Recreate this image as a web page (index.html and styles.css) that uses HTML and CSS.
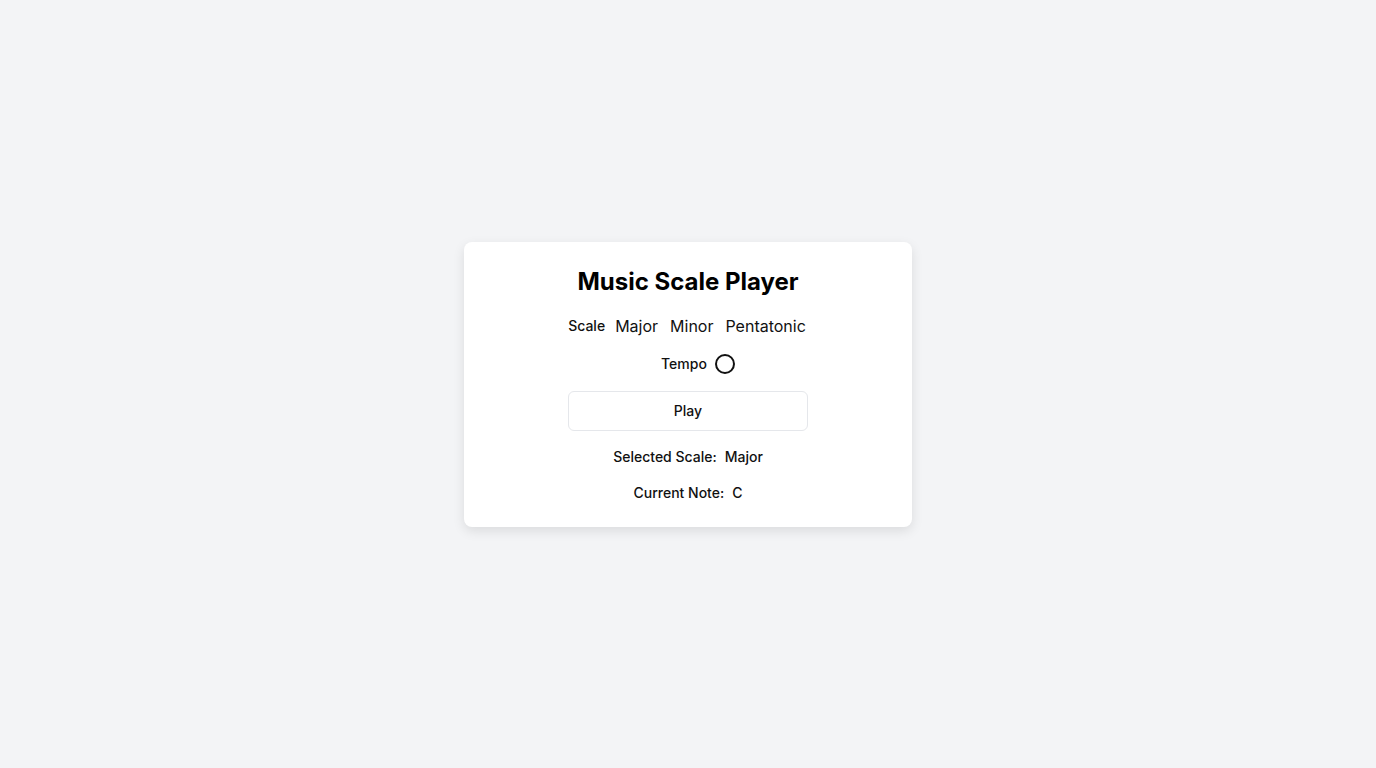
FILE: index.html
```html
<!DOCTYPE html>
<html lang="en">
<head>
<meta charset="utf-8">
<title>Music Scale Player</title>
<link rel="stylesheet" href="styles.css">
</head>
<body>
<main class="page">
  <section class="card">
    <h1 class="title">Music Scale Player</h1>
    <div class="row scale-row">
      <span class="label">Scale</span>
      <span class="option">Major</span>
      <span class="option">Minor</span>
      <span class="option">Pentatonic</span>
    </div>
    <div class="row tempo-row">
      <span class="label">Tempo</span>
      <span class="knob"></span>
    </div>
    <button class="play">Play</button>
    <div class="row info"><span>Selected Scale:</span><span>Major</span></div>
    <div class="row info"><span>Current Note:</span><span>C</span></div>
  </section>
</main>
</body>
</html>
```
FILE: styles.css
```css
* { box-sizing: border-box; }
html, body { margin: 0; padding: 0; }
body {
  background: #f3f4f6;
  font-family: Inter, "Noto Sans", sans-serif;
  color: #111111;
}
.page {
  min-height: 768px;
  display: flex;
  align-items: center;
  justify-content: center;
}
.card {
  width: 448px;
  background: #ffffff;
  border-radius: 8px;
  box-shadow: 0 4px 12px rgba(0, 0, 0, 0.1);
  padding: 24px;
  display: flex;
  flex-direction: column;
  align-items: center;
  gap: 16px;
}
.title {
  margin: 0;
  font-size: 24px;
  line-height: 32px;
  font-weight: 700;
  color: #000;
}
.row {
  display: flex;
  align-items: center;
  justify-content: center;
  gap: 8px;
  font-size: 14px;
  line-height: 20px;
}
.scale-row { gap: 12px; line-height: 24px; padding-right: 2px; }
.scale-row .label { margin-right: -2px; }
.option { font-size: 16px; }
.label { font-weight: 500; }
.tempo-row { height: 21px; padding-left: 20px; }
.knob {
  width: 20px;
  height: 20px;
  border: 2px solid #111;
  border-radius: 50%;
}
.play {
  width: 240px;
  height: 40px;
  background: #fff;
  border: 1px solid #e5e7eb;
  border-radius: 6px;
  font-family: inherit;
  font-size: 14px;
  font-weight: 500;
  color: #111;
}
.info { font-weight: 500; gap: 8px; }
```
